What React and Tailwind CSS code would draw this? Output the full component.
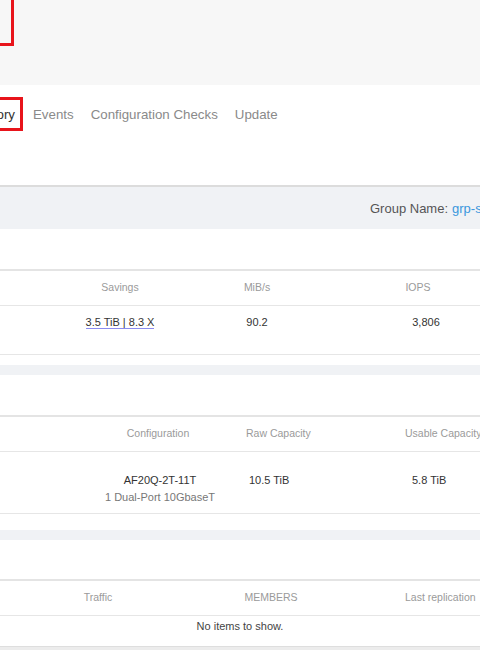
export default function App() {
  return (
    <div
      className="w-[480px] h-[650px] overflow-hidden bg-white"
      style={{ fontFamily: '"Liberation Sans", Arial, sans-serif' }}
    >
      {/* top header */}
      <div className="h-[85px] bg-[#f7f7f7] overflow-hidden">
        <div className="w-[40px] h-[50px] -ml-[26px] -mt-[4px] border-[3px] border-[#e8141b]" />
      </div>

      {/* tabs */}
      <div className="h-[100px] pt-[12px]">
        <div className="flex items-center text-[13.3px] text-[#8a8a8a] whitespace-nowrap">
          <div className="shrink-0 w-[64px] h-[34px] -ml-[41px] pt-[2px] border-[3px] border-[#e8141b] flex items-center justify-end pr-[5px] text-[#333]">
            History
          </div>
          <span className="shrink-0 ml-[10px] pt-[2px]">Events</span>
          <span className="shrink-0 ml-[17px] pt-[2px]">Configuration Checks</span>
          <span className="shrink-0 ml-[17px] pt-[2px]">Update</span>
        </div>
      </div>

      {/* group bar */}
      <div className="border-t-2 border-[#dcdcdc] h-[44px] pt-[2px] bg-[#f0f2f5] flex items-center whitespace-nowrap text-[13px]">
        <span className="shrink-0 ml-[370px] text-[#555]">Group Name:</span>
        <span className="shrink-0 ml-[4px] text-[#3a97dd]">grp-sfo-01</span>
      </div>

      {/* performance */}
      <div className="h-[40px]" />
      <div className="border-t-2 border-[#e4e4e4]">
        <div className="flex h-[35px] items-center text-[10.5px] text-[#9a9a9a] whitespace-nowrap border-b border-[#e6e6e6]">
          <div className="shrink-0 w-[40px]" />
          <div className="shrink-0 w-[160px] text-center">Savings</div>
          <div className="shrink-0 w-[114px] text-center">MiB/s</div>
          <div className="shrink-0 w-[208px] text-center">IOPS</div>
        </div>
        <div className="flex h-[49px] pt-[8px] text-[11px] leading-[17px] text-[#333] whitespace-nowrap border-b border-[#e6e6e6]">
          <div className="shrink-0 w-[40px]" />
          <div className="shrink-0 w-[160px] text-center">
            <span className="border-b border-[#8b8cf0]">3.5 TiB | 8.3 X</span>
          </div>
          <div className="shrink-0 w-[114px] text-center">90.2</div>
          <div className="shrink-0 w-[208px] text-center pl-[16px]">3,806</div>
        </div>
      </div>

      {/* hardware */}
      <div className="h-[10px]" />
      <div className="h-[10px] bg-[#f0f2f5]" />
      <div className="h-[40px]" />
      <div className="border-t-2 border-[#e4e4e4]">
        <div className="flex h-[35px] items-center text-[10.5px] text-[#9a9a9a] whitespace-nowrap border-b border-[#e6e6e6]">
          <div className="shrink-0 w-[70px]" />
          <div className="shrink-0 w-[176px] text-center">Configuration</div>
          <div className="shrink-0 w-[62px] text-center">Raw Capacity</div>
          <div className="shrink-0 pl-[97px]">Usable Capacity</div>
        </div>
        <div className="flex h-[62px] pt-[20px] text-[11px] leading-[17px] whitespace-nowrap border-b border-[#e6e6e6]">
          <div className="shrink-0 w-[73px]" />
          <div className="shrink-0 w-[174px] text-center">
            <div className="text-[#333]">AF20Q-2T-11T</div>
            <div className="text-[#777]">1 Dual-Port 10GbaseT</div>
          </div>
          <div className="shrink-0 w-[61px] pl-[2px] text-[#333]">10.5 TiB</div>
          <div className="shrink-0 pl-[104px] text-[#333]">5.8 TiB</div>
        </div>
      </div>

      {/* replication */}
      <div className="h-[16px]" />
      <div className="h-[10px] bg-[#f0f2f5]" />
      <div className="h-[39px]" />
      <div className="border-t-2 border-[#e4e4e4]">
        <div className="flex h-[35px] items-center text-[10.5px] text-[#9a9a9a] whitespace-nowrap border-b border-[#e6e6e6]">
          <div className="shrink-0 w-[196px] text-center">Traffic</div>
          <div className="shrink-0 w-[150px] text-center">MEMBERS</div>
          <div className="shrink-0 pl-[59px]">Last replication</div>
        </div>
        <div className="h-[30px] pt-[2px] text-center text-[11px] leading-[17px] text-[#444]">
          No items to show.
        </div>
        <div className="h-[6px] border-t border-[#dedede] bg-[#ececec]" />
      </div>
    </div>
  );
}
